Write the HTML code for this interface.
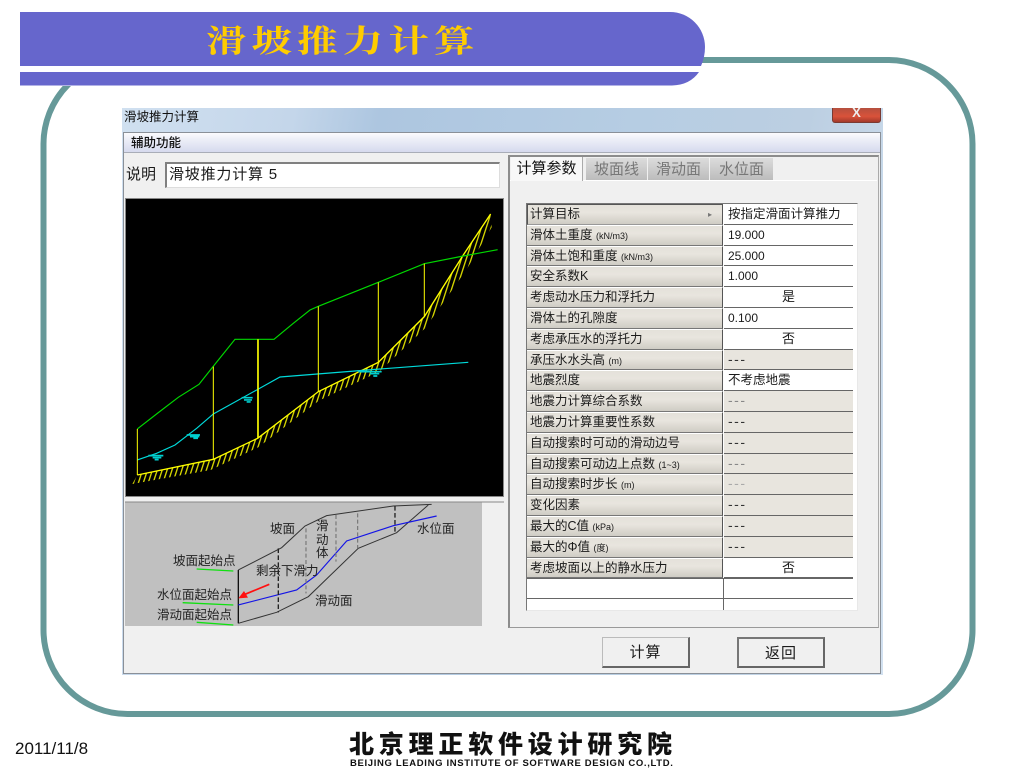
<!DOCTYPE html>
<html><head><meta charset="utf-8">
<style>
html,body{margin:0;padding:0;background:#fff;width:1024px;height:768px;overflow:hidden}
body{position:relative;font-family:"Liberation Sans","Noto Sans CJK SC",sans-serif;color:#1a1a1a}
.a{position:absolute;white-space:nowrap}
.r{position:absolute;left:527px;width:326px;height:20.8px;box-sizing:border-box}
.h{position:absolute;left:0;top:0;width:196px;height:20.8px;box-sizing:border-box;background:linear-gradient(#e4e1da,#e8e5de 40%,#cfccc4);border-top:1px solid #fff;border-bottom:1px solid #777;border-right:1px solid #555;font-size:12.5px;line-height:19px;padding-left:3px;white-space:nowrap;overflow:hidden}
.h small{font-size:9px}
.v{position:absolute;left:197px;top:0;width:129px;height:20.8px;box-sizing:border-box;border-bottom:1px solid #666;font-size:12px;line-height:20px;padding-left:4px;white-space:nowrap;background:#e8e5de;color:#333}
.m{letter-spacing:1.5px;font-size:14px;line-height:18px}
.w{background:#fff;color:#1a1a1a}
.c{text-align:center;padding:0;font-size:13px}
.d{color:#aaa}
.tab{position:absolute;top:158px;height:22px;font-size:15px;line-height:23px;text-align:center;color:#777;background:linear-gradient(#dcdcdc,#bcbcbc)}
.btn{position:absolute;top:637px;width:88px;height:31px;box-sizing:border-box;background:#f0f0f0;border:1px solid #bbb;border-right:2px solid #666;border-bottom:2px solid #666;font-size:15px;line-height:29px;text-align:center;letter-spacing:1px}
</style></head><body>

<svg class="a" style="left:0;top:0" width="1024" height="768">
<rect x="43.5" y="60" width="929" height="654" rx="84" ry="84" fill="none" stroke="#669999" stroke-width="6"/>
<rect x="20" y="60" width="680" height="26" fill="#fff"/>
<path d="M20 12H670A35 35 0 0 1 705 47Q705 57 701 66H20Z" fill="#6666cc"/>
<path d="M20 72H699Q690 85 672 85.500H20Z" fill="#6666cc"/>
</svg>
<div class="a" style="left:206px;top:14px;font-family:'Noto Serif CJK SC','Noto Sans CJK SC',serif;font-weight:700;font-size:31px;line-height:50px;letter-spacing:4.100px;color:#ffcc00;transform:scaleX(1.3);transform-origin:0 0">滑坡推力计算</div>

<!-- window -->
<div class="a" style="left:122px;top:108px;width:761px;height:567px;background:linear-gradient(100deg,#d0e0f0 0%,#c4d6ea 20%,#adc6e0 30%,#b6cde3 60%,#bccfe2 80%,#d2e1f0 100%)"></div>
<div class="a" style="left:124px;top:109px;font-size:12.500px;line-height:16px;color:#111">滑坡推力计算</div>
<div class="a" style="left:832px;top:108px;width:49px;height:15px;box-sizing:border-box;background:linear-gradient(#b5503f,#d9523a 60%,#a33a2b);border:1px solid #7a3a32;border-top:0;border-radius:0 0 3px 3px;color:#eee;font-weight:700;font-size:13px;line-height:10px;text-align:center">X</div>
<div class="a" style="left:123px;top:132px;width:758px;height:542px;box-sizing:border-box;background:#f0f0f0;border:1px solid #8a9098"></div>
<div class="a" style="left:124px;top:133px;width:756px;height:20px;box-sizing:border-box;background:linear-gradient(#fbfbfe,#eef0f8 30%,#d6daee);border-bottom:1px solid #a9adb8"></div>
<div class="a" style="left:131px;top:135px;font-size:12.500px;line-height:16px;color:#111;font-weight:500">辅助功能</div>

<div class="a" style="left:126px;top:165px;font-size:15px;line-height:20px">说明</div>
<div class="a" style="left:165px;top:162px;width:335px;height:26px;box-sizing:border-box;background:#fff;border:1px solid #ddd;border-top:2px solid #808080;border-left:2px solid #808080;font-size:15px;line-height:22px;padding-left:2px;letter-spacing:.8px">滑坡推力计算 5</div>

<!-- black canvas -->
<svg class="a" style="left:120px;top:190px" width="390" height="310" viewBox="0 0 390 310">
<defs>
<pattern id="ht" patternUnits="userSpaceOnUse" width="14" height="14" patternTransform="rotate(18)">
<rect x="0" y="0" width="4" height="14" fill="#d8d800"/>
</pattern>
</defs>
<rect x="5.500" y="8.500" width="378" height="298" fill="#000" stroke="#888" stroke-width="1"/>
<g transform="scale(.3333)" fill="none">
<path d="M52 855L280 808L413 745L595 605L775 517L913 380L1030 195L1112 72L1115 112L1040 238L915 415L778 545L597 632L415 772L272 840L37 882Z" fill="url(#ht)"/>
<path d="M52 855L280 808L413 745L595 605L775 517L913 380L1030 195L1112 72" stroke="#ffff00" stroke-width="4"/>
<path d="M52 717L115 668L175 622L237 583L283 525L345 448L462 448L520 400L570 360L595 349L775 277L913 221L1030 198L1133 179" stroke="#00d800" stroke-width="3.500"/>
<path d="M52 810L110 790L165 765L230 715L280 672L410 600L480 561L780 537L1045 517" stroke="#00dada" stroke-width="3.500"/>
<path d="M52 717V855M280 530V808M595 349V605M775 277V517M913 221V380" stroke="#ffff00" stroke-width="3"/>
<path d="M414 448V745" stroke="#ffff00" stroke-width="5"/>
<path d="M85 797H130M98 803H124M104 809H116M200 735H240M210 740H238M220 745H234M365 623H398M372 630H396M380 636H392M715 545H785M750 551H778M760 558H772" stroke="#00d0d0" stroke-width="5"/>
</g>
</svg>

<!-- diagram -->
<svg class="a" style="left:120px;top:495px" width="390" height="140" viewBox="0 0 390 140">
<rect x="5" y="7" width="357" height="124" fill="#c0c0c0"/>
<line x1="5" y1="7" x2="384" y2="7" stroke="#888" stroke-width="1"/>
<g transform="scale(.3333)" fill="none">
<path d="M355 225L485 158L555 93L620 62L820 33L935 28M355 385L470 352L565 305L715 160L830 113L925 30" stroke="#333" stroke-width="3"/>
<path d="M355 225V385" stroke="#111" stroke-width="4"/>
<path d="M355 330L530 285L590 240L680 138L820 92L950 63" stroke="#1414e6" stroke-width="3.500"/>
<path d="M475 160V352M825 33V113" stroke="#222" stroke-width="4" stroke-dasharray="14 7"/>
<path d="M558 100V295M648 60V200M713 55V160" stroke="#777" stroke-width="3.500" stroke-dasharray="12 7"/>
<path d="M448 268L375 298" stroke="#ff1010" stroke-width="5"/>
<path d="M355 310L372 288L384 308Z" fill="#ff1010"/>
<path d="M230 222L340 228M188 323L340 330M230 382L340 390" stroke="#10e010" stroke-width="4"/>
</g>
</svg>
<div class="a" style="left:270px;top:521px;font-size:12.500px;line-height:16px;color:#222">坡面</div>
<div class="a" style="left:316px;top:520px;font-size:12.500px;line-height:13.500px;color:#222;white-space:normal;width:14px">滑动体</div>
<div class="a" style="left:256px;top:563px;font-size:12.500px;line-height:16px;color:#222">剩余下滑力</div>
<div class="a" style="left:173px;top:553px;font-size:12.500px;line-height:16px;color:#222">坡面起始点</div>
<div class="a" style="left:157px;top:587px;font-size:12.500px;line-height:16px;color:#222">水位面起始点</div>
<div class="a" style="left:157px;top:607px;font-size:12.500px;line-height:16px;color:#222">滑动面起始点</div>
<div class="a" style="left:315px;top:593px;font-size:12.500px;line-height:16px;color:#222">滑动面</div>
<div class="a" style="left:417px;top:521px;font-size:12.500px;line-height:16px;color:#222">水位面</div>

<!-- tab pane -->
<div class="a" style="left:508px;top:155px;width:371px;height:473px;box-sizing:border-box;border:2px solid #8c8c8c;border-right:1px solid #aaa;border-bottom:1px solid #999;background:#f0f0f0"></div>
<div class="a" style="left:510px;top:180px;width:367px;height:1px;background:#fff"></div>
<div class="tab" style="left:511px;top:157px;width:71px;height:24px;background:#f8f8f8;color:#111;border-right:1px solid #aaa">计算参数</div>
<div class="tab" style="left:586px;width:61px">坡面线</div>
<div class="tab" style="left:648px;width:61px">滑动面</div>
<div class="tab" style="left:710px;width:63px">水位面</div>

<!-- table -->
<div class="a" style="left:526px;top:203px;width:332px;height:408px;box-sizing:border-box;background:#fff;border-top:1px solid #777;border-left:1px solid #777;border-right:1px solid #e8e8e8;border-bottom:1px solid #e8e8e8"></div>
<div class="r" style="top:204px"><div class="h" style="border:1px solid #555;border-bottom-color:#999;padding-left:2px">计算目标<span class="a" style="left:180px;top:0;color:#777;font-size:8px">▸</span></div><div class="v w" style="font-size:12.500px">按指定滑面计算推力</div></div>
<div class="r" style="top:224.800px"><div class="h">滑体土重度 <small>(kN/m3)</small></div><div class="v w">19.000</div></div>
<div class="r" style="top:245.600px"><div class="h">滑体土饱和重度 <small>(kN/m3)</small></div><div class="v w">25.000</div></div>
<div class="r" style="top:266.400px"><div class="h">安全系数K</div><div class="v w">1.000</div></div>
<div class="r" style="top:287.200px"><div class="h">考虑动水压力和浮托力</div><div class="v w c">是</div></div>
<div class="r" style="top:308px"><div class="h">滑体土的孔隙度</div><div class="v w">0.100</div></div>
<div class="r" style="top:328.800px"><div class="h">考虑承压水的浮托力</div><div class="v w c">否</div></div>
<div class="r" style="top:349.600px"><div class="h">承压水水头高 <small>(m)</small></div><div class="v m">---</div></div>
<div class="r" style="top:370.400px"><div class="h">地震烈度</div><div class="v w" style="font-size:12.500px">不考虑地震</div></div>
<div class="r" style="top:391.200px"><div class="h">地震力计算综合系数</div><div class="v m" style="color:#888">---</div></div>
<div class="r" style="top:412px"><div class="h">地震力计算重要性系数</div><div class="v m">---</div></div>
<div class="r" style="top:432.800px"><div class="h">自动搜索时可动的滑动边号</div><div class="v m">---</div></div>
<div class="r" style="top:453.600px"><div class="h">自动搜索可动边上点数 <small>(1~3)</small></div><div class="v m" style="color:#888">---</div></div>
<div class="r" style="top:474.400px"><div class="h">自动搜索时步长 <small>(m)</small></div><div class="v m d">---</div></div>
<div class="r" style="top:495.200px"><div class="h">变化因素</div><div class="v m">---</div></div>
<div class="r" style="top:516px"><div class="h">最大的C值 <small>(kPa)</small></div><div class="v m">---</div></div>
<div class="r" style="top:536.800px"><div class="h">最大的Φ值 <small>(度)</small></div><div class="v m">---</div></div>
<div class="r" style="top:557.600px"><div class="h">考虑坡面以上的静水压力</div><div class="v w c">否</div></div>
<div class="a" style="left:527px;top:598px;width:326px;height:1px;background:#666"></div>
<div class="a" style="left:527px;top:578px;width:326px;height:1px;background:#666"></div>
<div class="a" style="left:723px;top:578px;width:1px;height:32px;background:#666"></div>

<div class="btn" style="left:602px">计算</div>
<div class="btn" style="left:737px;border:2px solid #666;border-top-color:#777;border-left-color:#777">返回</div>

<!-- footer -->
<div class="a" style="left:15px;top:739px;font-size:17px;line-height:20px;color:#111">2011/11/8</div>
<div class="a" style="left:349px;top:727px;font-family:'Noto Sans CJK SC',sans-serif;font-weight:900;font-size:25px;line-height:32px;letter-spacing:4.800px;color:#111">北京理正软件设计研究院</div>
<div class="a" style="left:350px;top:758px;font-weight:700;font-size:9.500px;line-height:11px;letter-spacing:.65px;color:#111">BEIJING LEADING INSTITUTE OF SOFTWARE DESIGN CO.,LTD.</div>

</body></html>
